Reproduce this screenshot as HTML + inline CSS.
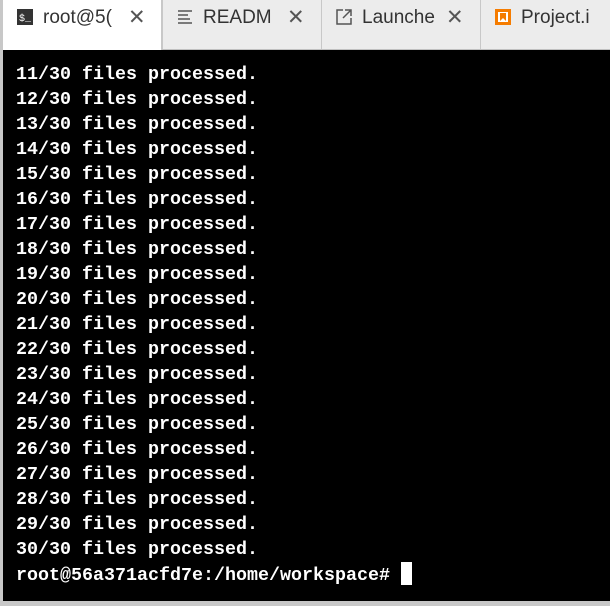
<!DOCTYPE html><html><head><style>
body{margin:0;width:610px;height:606px;background:#c8c8c8;position:relative;overflow:hidden;font-family:"Liberation Sans",sans-serif}
.bar{position:absolute;left:3px;top:0;width:607px;height:49px;background:#ececec;border-bottom:1px solid #c0c0c0}
.tab{position:absolute;top:0;height:49px;box-sizing:border-box;border-right:1px solid #c8c8c8;color:#333;font-size:19px;line-height:36px;white-space:nowrap;overflow:hidden}
.tab .ic{position:absolute;left:14px;top:9px}
.tab .t{position:absolute;left:40px;top:0}
.tab .x{position:absolute;top:0;font-size:21px;color:#555}
.term{position:absolute;left:3px;top:50px;width:607px;height:551px;background:#000;}
pre{margin:0;position:absolute;left:13px;top:12px;color:#fff;font-family:"Liberation Mono",monospace;font-weight:bold;font-size:18.33px;line-height:25px}
.cur{display:inline-block;width:11px;height:23px;background:#fff;vertical-align:-5px;margin-left:11px}
</style></head><body>
<div class="bar">
<div class="tab" style="left:0;width:159px;background:#fff;height:50px"><svg class="ic" width="16" height="16"><rect width="16" height="16" fill="#333"/><text x="2" y="12" font-size="10" fill="#fff" font-family="Liberation Mono">$_</text></svg><span class="t">root@5(</span><span class="x" style="left:125px">✕</span></div>
<div class="tab" style="left:159px;width:160px;border-left:1px solid #c8c8c8"><svg class="ic" width="16" height="16"><g stroke="#555" stroke-width="1.5"><path d="M1 2h14M1 6h10M1 10h12M1 14h14"/></g></svg><span class="t">READM</span><span class="x" style="left:124px">✕</span></div>
<div class="tab" style="left:319px;width:159px"><svg class="ic" width="16" height="16"><g stroke="#555" stroke-width="1.5" fill="none"><path d="M7 1H1v14h14V9M9 1h6v6M15 1L7 9"/></g></svg><span class="t">Launche</span><span class="x" style="left:124px">✕</span></div>
<div class="tab" style="left:478px;width:140px;border-right:none"><svg class="ic" width="16" height="16"><rect width="16" height="16" fill="#f57c00"/><rect x="3" y="3" width="10" height="10" fill="#fff"/><path d="M5 4h6v8l-3-3-3 3z" fill="#f57c00"/></svg><span class="t">Project.i</span></div>
</div>
<div class="term"><pre>11/30 files processed.
12/30 files processed.
13/30 files processed.
14/30 files processed.
15/30 files processed.
16/30 files processed.
17/30 files processed.
18/30 files processed.
19/30 files processed.
20/30 files processed.
21/30 files processed.
22/30 files processed.
23/30 files processed.
24/30 files processed.
25/30 files processed.
26/30 files processed.
27/30 files processed.
28/30 files processed.
29/30 files processed.
30/30 files processed.
root@56a371acfd7e:/home/workspace#<span class="cur"></span></pre></div>
</body></html>
